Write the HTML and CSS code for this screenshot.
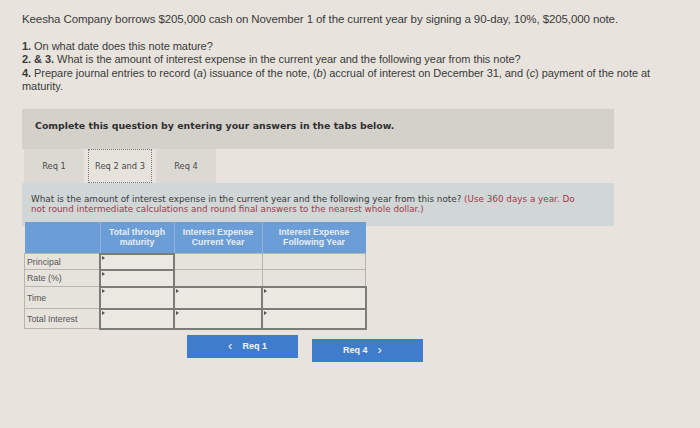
FILE: index.html
```html
<!DOCTYPE html>
<html>
<head>
<meta charset="utf-8">
<link rel="stylesheet" href="styles.css">
</head>
<body>
<div class="page">
  <p class="intro">Keesha Company borrows $205,000 cash on November 1 of the current year by signing a 90-day, 10%, $205,000 note.</p>
  <div class="questions">
    <div><b>1.</b> On what date does this note mature?</div>
    <div><b>2. &amp; 3.</b> What is the amount of interest expense in the current year and the following year from this note?</div>
    <div><span class="nowrap"><b>4.</b> Prepare journal entries to record (<i>a</i>) issuance of the note, (<i>b</i>) accrual of interest on December 31, and (<i>c</i>) payment of the note at</span><br><span>maturity.</span></div>
  </div>
  <div class="panel">
    <div class="panel-head">Complete this question by entering your answers in the tabs below.</div>
    <div class="tabs">
      <div class="tab">Req 1</div>
      <div class="tab active">Req 2 and 3</div>
      <div class="tab">Req 4</div>
    </div>
    <div class="instr"><span class="nowrap">What is the amount of interest expense in the current year and the following year from this note? <span class="red">(Use 360 days a year. Do</span></span><br><span class="red">not round intermediate calculations and round final answers to the nearest whole dollar.)</span></div>
  </div>
  <table class="grid">
    <thead>
      <tr>
        <th class="c0"></th>
        <th class="c1">Total through<br>maturity</th>
        <th class="c2">Interest Expense<br>Current Year</th>
        <th class="c3">Interest Expense<br>Following Year</th>
      </tr>
    </thead>
    <tbody>
      <tr class="r1"><td class="lbl">Principal</td><td class="in"></td><td></td><td></td></tr>
      <tr class="r2"><td class="lbl">Rate (%)</td><td class="in"></td><td></td><td></td></tr>
      <tr class="r3"><td class="lbl">Time</td><td class="in"></td><td class="in"></td><td class="in"></td></tr>
      <tr class="r4"><td class="lbl">Total Interest</td><td class="in"></td><td class="in"></td><td class="in"></td></tr>
    </tbody>
  </table>
  <div class="nav">
    <div class="btn prev"><span class="chev">&lsaquo;</span>Req 1</div>
    <div class="btn next">Req 4<span class="chev">&rsaquo;</span></div>
  </div>
</div>
</body>
</html>
```
FILE: styles.css
```css
html, body {
  margin: 0;
  padding: 0;
  background: #e8e4dd;
}
body {
  font-family: "Liberation Sans", Arial, sans-serif;
  color: #3a3a3a;
  width: 700px;
  height: 428px;
  overflow: hidden;
}
.page {
  padding: 13px 0 0 22px;
}
.nowrap { white-space: nowrap; }
.intro {
  margin: 0 0 14px 0;
  font-size: 11.5px;
  line-height: 13px;
  letter-spacing: -0.1px;
}
.questions {
  font-size: 11px;
  line-height: 13.4px;
  width: 660px;
  letter-spacing: -0.05px;
}
.questions b { font-weight: bold; }
.panel {
  margin-top: 15px;
  width: 592px;
}
.panel-head {
  background: #d4d1cb;
  height: 40px;
  box-sizing: border-box;
  padding: 11px 0 0 13px;
  font-family: "DejaVu Sans", Verdana, sans-serif;
  font-size: 9.4px;
  font-weight: bold;
  color: #2f2f2f;
}
.tabs {
  display: flex;
  height: 34px;
  padding-left: 2px;
  gap: 4px;
}
.tab {
  width: 60px;
  background: #dcd9d3;
  font-family: "DejaVu Sans", Verdana, sans-serif;
  font-size: 8.3px;
  color: #4a4a4a;
  display: flex;
  align-items: center;
  justify-content: center;
}
.tab.active {
  width: 64px;
  background: #e6e3dd;
  border: 1px dotted #7a7a7a;
  box-sizing: border-box;
}
.instr {
  background: #d1d6d7;
  height: 43px;
  box-sizing: border-box;
  padding: 11px 8px 0 9px;
  font-family: "DejaVu Sans", Verdana, sans-serif;
  font-size: 8.8px;
  line-height: 10.8px;
  color: #3b3b3b;
}
.red { color: #a8384a; }
.grid {
  border-collapse: collapse;
  margin: -4px 0 0 2px;
  font-size: 8.8px;
}
.grid th {
  background: #6b9dd6;
  color: #e8eef6;
  font-weight: bold;
  height: 31px;
  padding: 0;
  line-height: 10px;
  vertical-align: middle;
  border-right: 1px solid #8fb3dd;
}
.c0 { width: 75px; }
.c1 { width: 73px; }
.c2 { width: 87px; }
.c3 { width: 103px; border-right: none !important; }
.grid td {
  border: 1px solid #b8b5ae;
  padding: 0;
  background: #e6e3dc;
}
.grid td.lbl {
  color: #555;
  padding-left: 2px;
}
.grid td.in {
  border: 2px solid #7b7b78;
  background: #ebe8e2;
  position: relative;
}
.grid td.in::before {
  content: "";
  position: absolute;
  left: 1px;
  top: 1px;
  border-left: 3px solid #555;
  border-top: 2px solid transparent;
  border-bottom: 2px solid transparent;
}
.r1 td { height: 14px; }
.r2 td { height: 15px; }
.r3 td { height: 20px; }
.r4 td { height: 18px; }
.nav {
  display: flex;
  gap: 14px;
  margin: 5px 0 0 165px;
}
.btn {
  width: 111px;
  height: 23px;
  background: #3f7ccb;
  color: #f2f5fa;
  font-size: 9px;
  font-weight: bold;
  display: flex;
  align-items: center;
  justify-content: center;
}
.btn.next { margin-top: 4px; }
.chev {
  font-size: 13px;
  font-weight: normal;
  margin: 0 10px;
  line-height: 1;
  position: relative;
  top: -1px;
}
```
